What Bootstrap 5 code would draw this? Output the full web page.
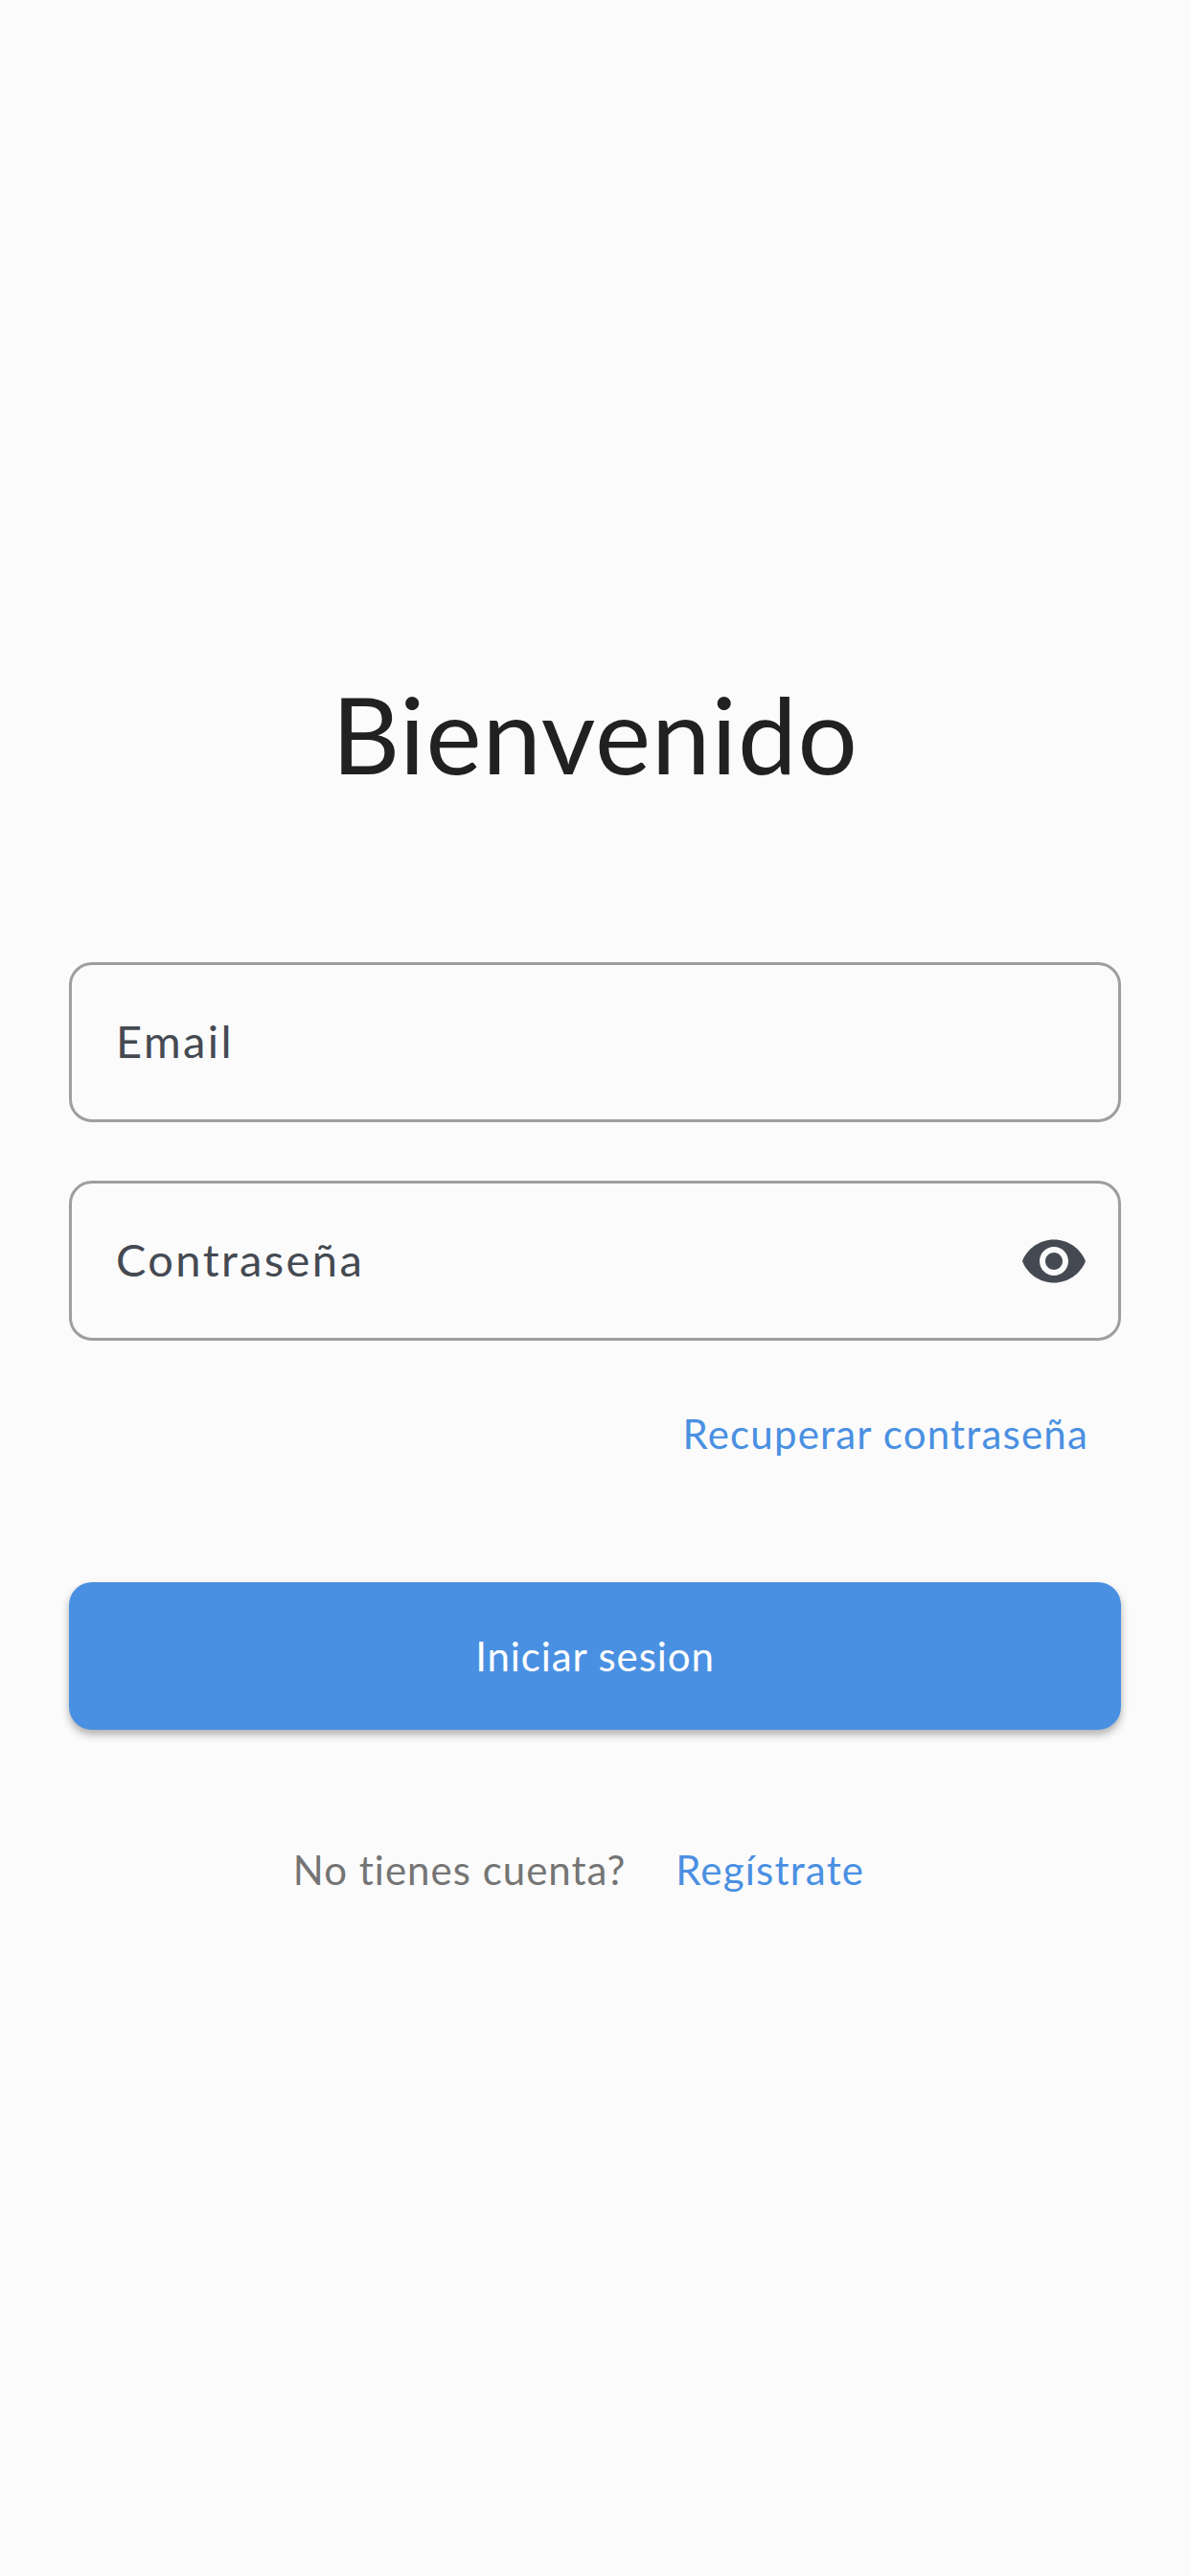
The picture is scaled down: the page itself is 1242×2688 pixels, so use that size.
<!DOCTYPE html>
<html lang="es">
<head>
    <meta charset="UTF-8">
    <meta name="viewport" content="width=device-width, initial-scale=1.0">
    <title>Bienvenido</title>
    <link href="https://cdn.jsdelivr.net/npm/bootstrap@5.3.0/dist/css/bootstrap.min.css" rel="stylesheet">
    <style>
        body {
            background: #fbfbfb;
            font-family: Lato, "Open Sans", sans-serif;
            font-variant-ligatures: none;
        }
        .login-wrap {
            padding: 690px 72px 0;
        }
        .login-title {
            font-family: Lato, "Open Sans", sans-serif;
            font-size: 110px;
            font-weight: 400;
            letter-spacing: 1px;
            line-height: 150px;
            color: #212121;
            margin-bottom: 164px;
        }
        .login-field {
            height: 167px;
            padding: 0 31px 3px 46px;
            background: transparent;
            border: 3px solid #9e9e9e;
            border-radius: 24px;
            font-size: 47px;
            letter-spacing: 2.4px;
            color: #454a52;
            margin-bottom: 61px;
        }
        .eye-icon {
            width: 72px;
            height: 72px;
            margin-top: 3px;
            fill: #454a52;
        }
        .forgot-row {
            padding-top: 8px;
            padding-right: 34px;
            margin-bottom: 127px;
        }
        .login-link {
            font-size: 42px;
            letter-spacing: 1.2px;
            line-height: 56px;
            color: #4a90e2;
            text-decoration: none;
        }
        .login-btn {
            height: 154px;
            background: #4a90e2;
            border: 0;
            border-radius: 24px;
            color: #fff;
            font-size: 42px;
            letter-spacing: .9px;
            box-shadow: 0 5px 9px rgba(0, 0, 0, .3);
            margin-bottom: 118px;
        }
        .login-btn:hover { background: #4a90e2; color: #fff; }
        .signup-text {
            font-size: 42px;
            letter-spacing: 1px;
            line-height: 56px;
            color: #757575;
        }
        .signup-row {
            gap: 52px;
            padding-right: 34px;
        }
    </style>
</head>
<body>
    <main class="login-wrap">
        <h1 class="login-title text-center">Bienvenido</h1>
        <form>
            <div class="login-field d-flex align-items-center">Email</div>
            <div class="login-field d-flex align-items-center justify-content-between">
                <span>Contraseña</span>
                <svg class="eye-icon" viewBox="0 0 24 24"><path d="M12 4.5C7 4.5 2.73 7.61 1 12c1.73 4.39 6 7.5 11 7.5s9.27-3.11 11-7.5c-1.73-4.39-6-7.5-11-7.5zM12 17c-2.76 0-5-2.24-5-5s2.24-5 5-5 5 2.24 5 5-2.24 5-5 5zm0-8c-1.66 0-3 1.34-3 3s1.34 3 3 3 3-1.34 3-3-1.34-3-3-3z"/></svg>
            </div>
            <div class="forgot-row d-flex justify-content-end">
                <a class="login-link" href="#">Recuperar contraseña</a>
            </div>
            <button type="button" class="btn login-btn w-100">Iniciar sesion</button>
            <div class="signup-row d-flex justify-content-center">
                <span class="signup-text">No tienes cuenta?</span>
                <a class="login-link" href="#">Regístrate</a>
            </div>
        </form>
    </main>
    <script src="https://cdn.jsdelivr.net/npm/bootstrap@5.3.0/dist/js/bootstrap.bundle.min.js"></script>
</body>
</html>
